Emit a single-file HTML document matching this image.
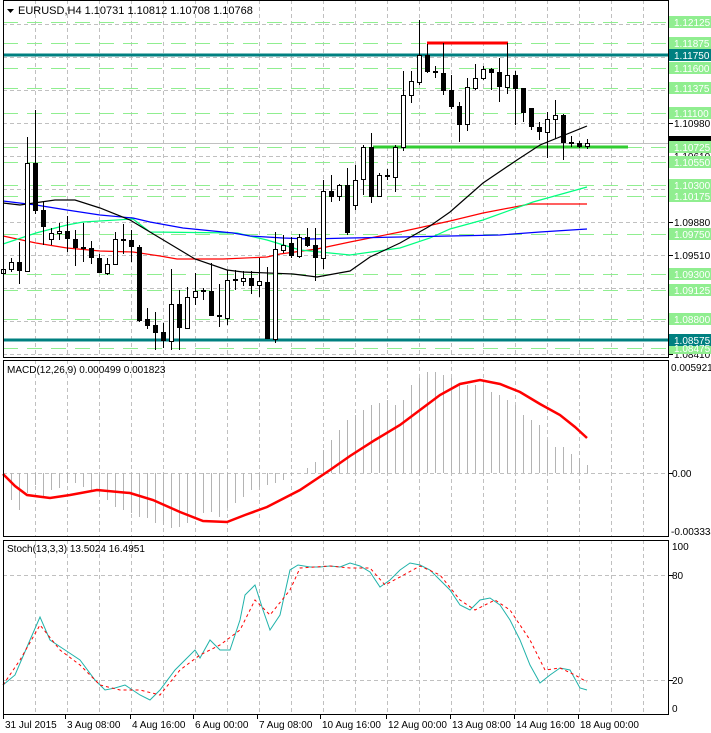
<!DOCTYPE html>
<html><head><meta charset="utf-8"><style>
html,body{margin:0;padding:0;background:#fff;}
svg{display:block;font-family:"Liberation Sans",sans-serif;}
</style></head><body>
<svg width="711" height="733" viewBox="0 0 711 733" xmlns="http://www.w3.org/2000/svg">
<rect width="711" height="733" fill="#fff"/>
<g stroke="#c0c0c0" stroke-dasharray="4,3" stroke-width="1">
<path d="M35.5 0V358M67.5 0V358M99.5 0V358M131.5 0V358M163.5 0V358M195.5 0V358M227.5 0V358M259.5 0V358M291.5 0V358M323.5 0V358M355.5 0V358M387.5 0V358M419.5 0V358M451.5 0V358M483.5 0V358M515.5 0V358M547.5 0V358M579.5 0V358M611.5 0V358M643.5 0V358"/>
<path d="M35.5 360V537M67.5 360V537M99.5 360V537M131.5 360V537M163.5 360V537M195.5 360V537M227.5 360V537M259.5 360V537M291.5 360V537M323.5 360V537M355.5 360V537M387.5 360V537M419.5 360V537M451.5 360V537M483.5 360V537M515.5 360V537M547.5 360V537M579.5 360V537M611.5 360V537M643.5 360V537"/>
<path d="M35.5 540V714M67.5 540V714M99.5 540V714M131.5 540V714M163.5 540V714M195.5 540V714M227.5 540V714M259.5 540V714M291.5 540V714M323.5 540V714M355.5 540V714M387.5 540V714M419.5 540V714M451.5 540V714M483.5 540V714M515.5 540V714M547.5 540V714M579.5 540V714M611.5 540V714M643.5 540V714"/>
<path d="M3 24.5H669M3 57.5H669M3 90.5H669M3 123.5H669M3 156.5H669M3 189.5H669M3 222.5H669M3 255.5H669M3 288.5H669M3 321.5H669M3 354.5H669"/>
<path d="M3 473.5H669M3 575.5H669M3 680.5H669"/>
</g>
<g stroke="#90ee90" stroke-dasharray="15,9" stroke-width="1">
<path d="M3 22.5H669M3 43.5H669M3 68.5H669M3 88.5H669M3 113.5H669M3 147.5H669M3 162.5H669M3 185.5H669M3 196.5H669M3 234.5H669M3 274.5H669M3 290.5H669M3 319.5H669M3 348.5H669"/>
</g>
<path d="M3 143.5H669" stroke="#c0c0c0" stroke-width="1"/>
<path d="M3 55H669M3 340H669" stroke="#008080" stroke-width="3"/>
<path d="M373 147H628" stroke="#32cd32" stroke-width="3"/>
<path d="M427 43H508" stroke="#ff0000" stroke-width="3"/>
<g fill="none" stroke-width="1.2">
<polyline stroke="#ff0000" points="3,236 36,243 67,248 100,251 133,252 160,256 177,259 223,259 267,257 280,254 317,249 350,242 400,232 450,221 483,213 530,204 587,204"/>
<polyline stroke="#00ff7f" points="3,244 36,233 67,225 83,222 133,219 150,232 237,233 267,240 300,250 350,255 400,248 430,238 450,229 483,220 533,202 587,187"/>
<polyline stroke="#0000ff" points="3,201 36,205 67,210 100,215 133,218 150,222 183,228 233,233 250,236 283,238 310,239 350,238 400,237 450,236 500,235 540,232 587,229"/>
<polyline stroke="#000" points="3,203 20,205 55,200 75,200 100,208 130,220 150,232 195,259 227,270 243,272 293,274 317,277 350,271 370,257 400,243 430,226 450,212 483,183 517,160 540,145 587,126"/>
</g>
<g stroke="#000" stroke-width="1">
<path d="M3.5 260V277M11.5 258V272M19.5 242V284M27.5 137V271M35.5 110V214M43.5 201V245M51.5 228V245M59.5 223V240M67.5 216V252M75.5 230V266M83.5 223V262M91.5 241V264M99.5 254V273M107.5 258V275M115.5 232V265M123.5 224V254M131.5 230V262M139.5 245V322M147.5 308V329M155.5 312V350M163.5 323V348M171.5 269V350M179.5 290V350M187.5 287V329M195.5 273V305M203.5 288V300M211.5 263V316M219.5 284V327M227.5 270V325M235.5 270V290M243.5 271V286M251.5 271V294M259.5 258V297M267.5 267V339M275.5 232V343M283.5 235V253M291.5 237V258M299.5 234V258M307.5 228V247M315.5 228V281M323.5 180V269M331.5 175V202M339.5 184V201M347.5 168V235M355.5 165V210M363.5 145V195M371.5 133V203M379.5 173V197M387.5 169V180M395.5 145V192M403.5 71V151M411.5 71V103M419.5 20V85M427.5 44V73M435.5 66V78M443.5 43V95M451.5 75V109M459.5 102V142M467.5 78V131M475.5 64V90M483.5 66V80M491.5 68V90M499.5 58V102M507.5 43V94M515.5 71V125M523.5 88V122M531.5 108V130M539.5 122V140M547.5 112V158M555.5 100V139M563.5 114V160M571.5 136V147M579.5 141V148M587.5 139V149"/>
</g>
<g fill="#fff" stroke="#000" stroke-width="1">
<rect x="1.5" y="269.5" width="4" height="4"/><rect x="9.5" y="262.5" width="4" height="7"/><rect x="25.5" y="163.5" width="4" height="108"/><rect x="49.5" y="233.5" width="4" height="6"/><rect x="57.5" y="231.5" width="4" height="2"/><rect x="105.5" y="264.5" width="4" height="9"/><rect x="113.5" y="239.5" width="4" height="25"/><rect x="169.5" y="304.5" width="4" height="37"/><rect x="185.5" y="297.5" width="4" height="31"/><rect x="193.5" y="291.5" width="4" height="6"/><rect x="225.5" y="280.5" width="4" height="38"/><rect x="241.5" y="278.5" width="4" height="3"/><rect x="257.5" y="281.5" width="4" height="4"/><rect x="273.5" y="249.5" width="4" height="90"/><rect x="281.5" y="245.5" width="4" height="5"/><rect x="297.5" y="237.5" width="4" height="19"/><rect x="321.5" y="191.5" width="4" height="67"/><rect x="337.5" y="185.5" width="4" height="11"/><rect x="353.5" y="180.5" width="4" height="25"/><rect x="361.5" y="147.5" width="4" height="32"/><rect x="377.5" y="175.5" width="4" height="21"/><rect x="393.5" y="147.5" width="4" height="30"/><rect x="401.5" y="95.5" width="4" height="52"/><rect x="409.5" y="81.5" width="4" height="14"/><rect x="417.5" y="55.5" width="4" height="27"/><rect x="465.5" y="87.5" width="4" height="37"/><rect x="473.5" y="78.5" width="4" height="10"/><rect x="481.5" y="69.5" width="4" height="9"/><rect x="505.5" y="75.5" width="4" height="12"/><rect x="545.5" y="119.5" width="4" height="13"/><rect x="553.5" y="115.5" width="4" height="4"/><rect x="585.5" y="143.5" width="4" height="3"/>
</g>
<g fill="#000">
<rect x="17" y="262" width="5" height="9"/><rect x="33" y="163" width="5" height="48"/><rect x="41" y="210" width="5" height="17"/><rect x="65" y="231" width="5" height="8"/><rect x="73" y="239" width="5" height="9"/><rect x="81" y="247" width="5" height="2"/><rect x="89" y="248" width="5" height="10"/><rect x="97" y="258" width="5" height="15"/><rect x="121" y="239" width="5" height="2"/><rect x="129" y="240" width="5" height="7"/><rect x="137" y="247" width="5" height="74"/><rect x="145" y="319" width="5" height="7"/><rect x="153" y="325" width="5" height="8"/><rect x="161" y="332" width="5" height="9"/><rect x="177" y="304" width="5" height="24"/><rect x="201" y="290" width="5" height="2"/><rect x="209" y="291" width="5" height="25"/><rect x="217" y="315" width="5" height="2"/><rect x="233" y="279" width="5" height="2"/><rect x="249" y="278" width="5" height="8"/><rect x="265" y="282" width="5" height="57"/><rect x="289" y="243" width="5" height="13"/><rect x="305" y="237" width="5" height="9"/><rect x="313" y="245" width="5" height="13"/><rect x="329" y="191" width="5" height="6"/><rect x="345" y="185" width="5" height="48"/><rect x="369" y="147" width="5" height="50"/><rect x="385" y="175" width="5" height="2"/><rect x="425" y="55" width="5" height="17"/><rect x="433" y="71" width="5" height="2"/><rect x="441" y="73" width="5" height="18"/><rect x="449" y="90" width="5" height="17"/><rect x="457" y="106" width="5" height="19"/><rect x="489" y="69" width="5" height="4"/><rect x="497" y="72" width="5" height="15"/><rect x="513" y="75" width="5" height="14"/><rect x="521" y="88" width="5" height="25"/><rect x="529" y="108" width="5" height="19"/><rect x="537" y="127" width="5" height="5"/><rect x="561" y="115" width="5" height="28"/><rect x="569" y="142" width="5" height="2"/><rect x="577" y="143" width="5" height="4"/>
</g>
<path stroke="#b4b4b4" stroke-width="1" fill="none" d="M3.5 473V507M11.5 473V500M19.5 473V510M27.5 473V493M35.5 473V485M43.5 473V496M51.5 473V490M59.5 473V488M67.5 473V483M75.5 473V483M83.5 473V487M91.5 473V490M99.5 473V493M107.5 473V500M115.5 473V507M123.5 473V510M131.5 473V513M139.5 473V517M147.5 473V518M155.5 473V523M163.5 473V525M171.5 473V528M179.5 473V527M187.5 473V523M195.5 473V517M203.5 473V513M211.5 473V512M219.5 473V517M227.5 473V508M235.5 473V503M243.5 473V497M251.5 473V490M259.5 473V487M267.5 473V485M275.5 473V483M283.5 473V480M291.5 473V475M307.5 473V468M315.5 473V462M323.5 473V450M331.5 473V440M339.5 473V430M347.5 473V420M355.5 473V415M363.5 473V410M371.5 473V405M379.5 473V403M387.5 473V400M395.5 473V405M403.5 473V400M411.5 473V385M419.5 473V378M427.5 473V372M435.5 473V372M443.5 473V375M451.5 473V378M459.5 473V383M467.5 473V385M475.5 473V385M483.5 473V385M491.5 473V392M499.5 473V395M507.5 473V400M515.5 473V405M523.5 473V415M531.5 473V420M539.5 473V425M547.5 473V440M555.5 473V447M563.5 473V447M571.5 473V454M579.5 473V458M587.5 473V465"/>
<polyline fill="none" stroke="#ff0000" stroke-width="2.5" points="3,474 15,486 27,495 50,498 70,495 97,490 130,493 153,500 180,512 203,521 227,522 245,515 267,507 300,490 330,470 350,456 375,440 400,425 420,410 440,395 460,384 480,380 500,384 520,392 540,404 560,415 575,427 587,438"/>
<polyline fill="none" stroke="#20b2aa" stroke-width="1" points="3,685 15,675 30,640 40,617 50,640 65,650 80,660 95,680 105,690 115,688 125,685 140,695 150,700 160,690 175,670 185,660 195,650 200,658 210,640 220,650 230,650 240,620 245,595 255,585 263,610 270,630 280,615 290,570 298,565 310,567 320,567 330,566 340,567 350,563 360,566 370,572 380,587 390,580 400,570 410,563 420,565 430,570 440,580 450,590 460,605 470,610 480,600 490,598 500,605 510,620 520,640 530,665 540,683 550,675 560,668 570,670 580,688 587,690"/>
<polyline fill="none" stroke="#ff0000" stroke-width="1" stroke-dasharray="3,3" points="3,685 20,660 40,625 60,650 80,665 100,685 120,690 140,690 160,695 180,670 200,655 220,645 240,630 255,600 270,615 290,590 300,568 330,566 350,568 370,568 385,585 400,577 420,566 440,575 460,600 475,610 495,600 510,610 530,640 545,670 560,668 575,675 587,682"/>
<g fill="none" stroke="#000" stroke-width="1">
<rect x="3.5" y="0.5" width="665" height="357"/>
<rect x="3.5" y="360.5" width="665" height="176"/>
<rect x="3.5" y="540.5" width="665" height="174"/>
<path d="M669 24.5h4M669 57.5h4M669 90.5h4M669 123.5h4M669 156.5h4M669 189.5h4M669 222.5h4M669 255.5h4M669 288.5h4M669 321.5h4M669 354.5h4M669 473.5h4M669 575.5h4M669 680.5h4M3.5 715v4M65.5 715v4M130.5 715v4M193.5 715v4M257.5 715v4M320.5 715v4M386.5 715v4M450.5 715v4M514.5 715v4M578.5 715v4"/>
</g>
<g font-size="10" fill="#000">
<text x="674" y="27">1.12080</text><text x="674" y="60">1.11710</text><text x="674" y="93">1.11340</text><text x="674" y="127">1.10980</text><text x="674" y="160">1.10610</text><text x="674" y="193">1.10240</text><text x="674" y="226">1.09880</text><text x="674" y="259">1.09510</text><text x="674" y="292">1.09140</text><text x="674" y="325">1.08780</text><text x="674" y="358">1.08410</text>
</g>
<rect x="669" y="136" width="42" height="6" fill="#000"/>
<g fill="#90ee90">
<rect x="669" y="16" width="42" height="12"/><rect x="669" y="37" width="42" height="12"/><rect x="669" y="62" width="42" height="12"/><rect x="669" y="82" width="42" height="12"/><rect x="669" y="107" width="42" height="12"/><rect x="669" y="141" width="42" height="12"/><rect x="669" y="156" width="42" height="12"/><rect x="669" y="179" width="42" height="12"/><rect x="669" y="190" width="42" height="12"/><rect x="669" y="228" width="42" height="12"/><rect x="669" y="268" width="42" height="12"/><rect x="669" y="284" width="42" height="12"/><rect x="669" y="313" width="42" height="12"/><rect x="669" y="342" width="42" height="12"/>
</g>
<rect x="669" y="49" width="42" height="12" fill="#008080"/>
<rect x="669" y="334" width="42" height="12" fill="#008080"/>
<g font-size="10" fill="#fff">
<text x="674" y="26">1.12125</text><text x="674" y="47">1.11875</text><text x="674" y="59">1.11750</text><text x="674" y="72">1.11600</text><text x="674" y="92">1.11375</text><text x="674" y="117">1.11100</text><text x="674" y="151">1.10725</text><text x="674" y="166">1.10550</text><text x="674" y="189">1.10300</text><text x="674" y="200">1.10175</text><text x="674" y="238">1.09750</text><text x="674" y="278">1.09300</text><text x="674" y="294">1.09125</text><text x="674" y="323">1.08800</text><text x="674" y="344">1.08575</text><text x="674" y="352">1.08475</text>
</g>
<g font-size="10" fill="#000">
<text x="671" y="371">0.005921</text><text x="672" y="477">0.00</text><text x="671" y="535">-0.003334</text>
<text x="672" y="550">100</text><text x="672" y="579">80</text><text x="672" y="684">20</text><text x="672" y="712">0</text>
<text x="5" y="728">31 Jul 2015</text><text x="67" y="728">3 Aug 08:00</text><text x="132" y="728">4 Aug 16:00</text><text x="195" y="728">6 Aug 00:00</text><text x="259" y="728">7 Aug 08:00</text><text x="322" y="728">10 Aug 16:00</text><text x="388" y="728">12 Aug 00:00</text><text x="452" y="728">13 Aug 08:00</text><text x="516" y="728">14 Aug 16:00</text><text x="580" y="728">18 Aug 00:00</text>
</g>
<path d="M7 9h7l-3.5 4z" fill="#000"/>
<text x="18" y="14" font-size="11" fill="#000">EURUSD,H4  1.10731 1.10812 1.10708 1.10768</text>
<text x="7" y="373" font-size="10" fill="#000">MACD(12,26,9) 0.000499 0.001823</text>
<text x="7" y="552" font-size="10" fill="#000">Stoch(13,3,3) 13.5024 16.4951</text>
</svg>
</body></html>
